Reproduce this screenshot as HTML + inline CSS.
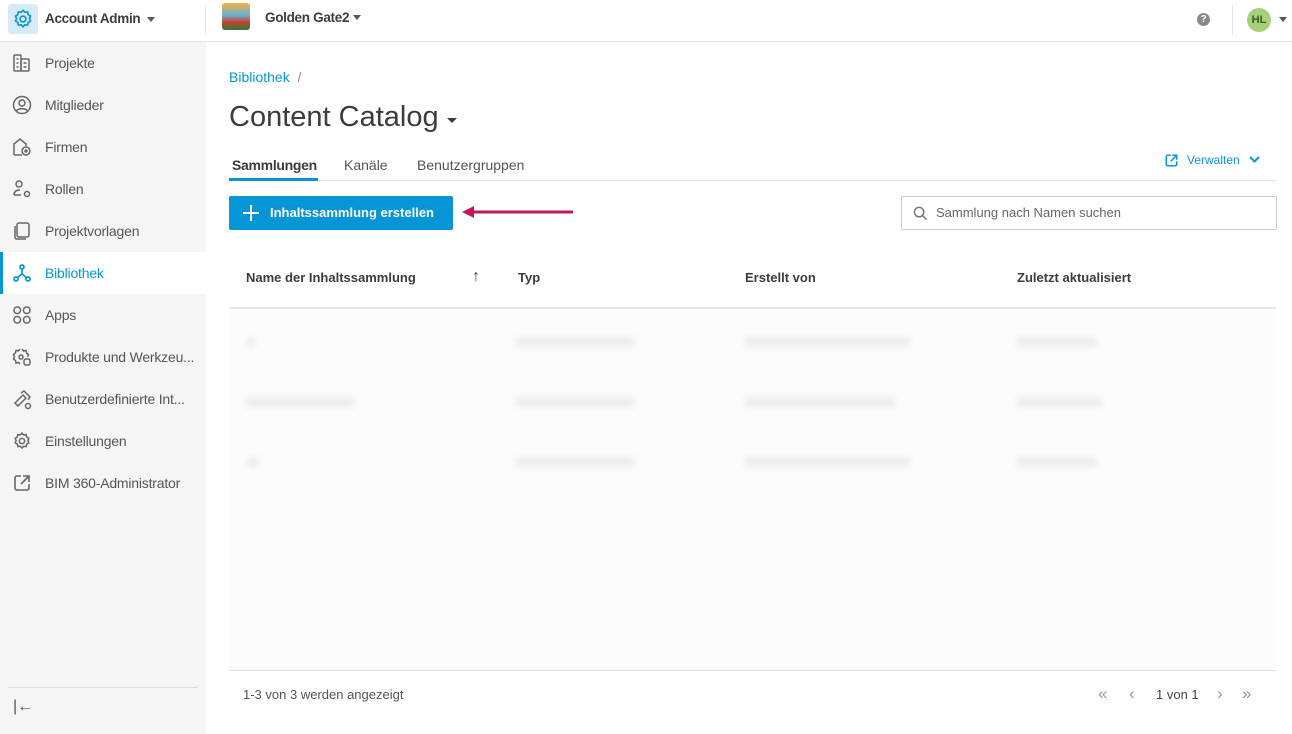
<!DOCTYPE html>
<html><head><meta charset="utf-8"><style>
*{box-sizing:border-box;margin:0;padding:0}
body{width:1292px;height:734px;overflow:hidden;background:#fff;font-family:"Liberation Sans",sans-serif;color:#3c3c3c;position:relative}
.a{position:absolute}
.top{left:0;top:0;width:1292px;height:42px;border-bottom:1px solid #e2e2e2;background:#fff}
.side{left:0;top:42px;width:206px;height:692px;background:#f5f5f5}
.item{position:absolute;left:0;width:206px;height:42px;display:flex;align-items:center;font-size:14px;color:#555}
.item svg{position:absolute;left:12px;top:11px}
.item span{position:absolute;left:45px;letter-spacing:-0.2px}
.act{background:#fff;color:#0696d7;border-left:3px solid #0696d7}
.blur{position:absolute;height:10px;background:#ececec;filter:blur(3px);border-radius:3px}
.th{position:absolute;top:270px;font-size:13px;font-weight:bold;color:#3c3c3c}
</style></head><body>
<div class="a top">
 <div class="a" style="left:8px;top:4px;width:30px;height:30px;background:#d6ebf7;border-radius:3px"></div>
 <svg class="a" style="left:12px;top:8px" width="22" height="22" viewBox="0 0 24 24" fill="none" stroke="#0696d7" stroke-width="1.8"><path d="M12 2.5l2 2.2 3-.4.6 2.9 2.6 1.6-1.2 2.7 1.2 2.7-2.6 1.6-.6 2.9-3-.4-2 2.2-2-2.2-3 .4-.6-2.9-2.6-1.6 1.2-2.7-1.2-2.7 2.6-1.6.6-2.9 3 .4z"/><circle cx="12" cy="12" r="3.2"/></svg>
 <div class="a" style="left:45px;top:11px;font-size:13.5px;font-weight:bold;color:#3c3c3c;letter-spacing:-0.3px">Account Admin</div>
 <div class="a" style="left:147px;top:17px;border:4px solid transparent;border-top:5px solid #555"></div>
 <div class="a" style="left:205px;top:5px;width:1px;height:30px;background:#e5e5e5"></div>
 <div class="a" style="left:222px;top:3px;width:28px;height:27px;border-radius:3px;background:linear-gradient(#f2b33d 0,#6ab0d8 45%,#c8412f 70%,#2f7a3a 100%)"></div>
 <div class="a" style="left:265px;top:10px;font-size:13.5px;font-weight:bold;color:#3c3c3c;letter-spacing:-0.3px">Golden Gate2</div>
 <div class="a" style="left:353px;top:15px;border:4px solid transparent;border-top:5px solid #555"></div>
 <div class="a" style="left:1197px;top:13px;width:13px;height:13px;border-radius:50%;background:#8a8a8a;color:#fff;font-size:10px;font-weight:bold;text-align:center;line-height:13px">?</div>
 <div class="a" style="left:1232px;top:5px;width:1px;height:30px;background:#e5e5e5"></div>
 <div class="a" style="left:1247px;top:8px;width:24px;height:24px;border-radius:50%;background:#a6d07a;color:#3c5a2a;font-size:11px;font-weight:bold;text-align:center;line-height:24px">HL</div>
 <div class="a" style="left:1279px;top:17px;border:4px solid transparent;border-top:5px solid #555"></div>
</div>
<div class="a side">
 <div class="item" style="top:0"><svg width="20" height="20" viewBox="0 0 20 20" fill="none" stroke="#666" stroke-width="1.5"><rect x="2" y="2" width="7" height="16" rx="1"/><rect x="9" y="6" width="8" height="12" rx="1"/><path d="M4.5 6h2M4.5 10h2M4.5 14h2M11.5 10h3M11.5 14h3"/></svg><span>Projekte</span></div>
 <div class="item" style="top:42px"><svg width="20" height="20" viewBox="0 0 20 20" fill="none" stroke="#666" stroke-width="1.5"><circle cx="10" cy="10" r="8.5"/><circle cx="10" cy="8" r="3"/><path d="M4.5 16c1.5-3 9.5-3 11 0"/></svg><span>Mitglieder</span></div>
 <div class="item" style="top:84px"><svg width="20" height="20" viewBox="0 0 20 20" fill="none" stroke="#666" stroke-width="1.5"><path d="M2 18V7l6-5 6 5v2M2 18h8"/><circle cx="14" cy="14" r="4"/><circle cx="14" cy="14" r="1"/></svg><span>Firmen</span></div>
 <div class="item" style="top:126px"><svg width="20" height="20" viewBox="0 0 20 20" fill="none" stroke="#666" stroke-width="1.5"><circle cx="7" cy="5" r="3"/><path d="M2 16c0-4 3-5 6-5M2 16h7"/><circle cx="15" cy="15" r="2.5"/></svg><span>Rollen</span></div>
 <div class="item" style="top:168px"><svg width="20" height="20" viewBox="0 0 20 20" fill="none" stroke="#666" stroke-width="1.5"><rect x="5" y="2" width="12" height="14" rx="2"/><path d="M3 5v11a2 2 0 002 2h9"/></svg><span>Projektvorlagen</span></div>
 <div class="item act" style="top:210px"><svg style="left:9px" width="20" height="20" viewBox="0 0 20 20" fill="none" stroke="#0696d7" stroke-width="1.7"><circle cx="10" cy="4" r="2"/><circle cx="4" cy="16" r="2"/><circle cx="16" cy="16" r="2"/><path d="M10 6v5l-5 4M10 11l5 4"/></svg><span style="left:42px">Bibliothek</span></div>
 <div class="item" style="top:252px"><svg width="20" height="20" viewBox="0 0 20 20" fill="none" stroke="#666" stroke-width="1.5"><rect x="2" y="2" width="6.5" height="6.5" rx="3"/><rect x="11.5" y="2" width="6.5" height="6.5" rx="3"/><rect x="2" y="11.5" width="6.5" height="6.5" rx="3"/><rect x="11.5" y="11.5" width="6.5" height="6.5" rx="3"/></svg><span>Apps</span></div>
 <div class="item" style="top:294px"><svg width="20" height="20" viewBox="0 0 20 20" fill="none" stroke="#666" stroke-width="1.5"><path d="M10 2l1.5 2 2.5-.5.5 2.5 2 1.5-1 2.3M8 17l-1.5-1.5-2.5.5-.5-2.5-2-1.5 1-2.3-1-2.3 2-1.5.5-2.5 2.5.5L8 2"/><circle cx="9" cy="10" r="2"/><rect x="12" y="12" width="6" height="6" rx="2"/></svg><span>Produkte und Werkzeu...</span></div>
 <div class="item" style="top:336px"><svg width="22" height="22" viewBox="0 0 22 22" fill="none" stroke="#666" stroke-width="1.5"><path d="M3 14l8-8 3 3-8 8zM9 4l3-2 6 6-2 3"/><circle cx="16" cy="17" r="2.5"/></svg><span>Benutzerdefinierte Int...</span></div>
 <div class="item" style="top:378px"><svg width="20" height="20" viewBox="0 0 24 24" fill="none" stroke="#666" stroke-width="1.8"><path d="M12 2.5l2 2.2 3-.4.6 2.9 2.6 1.6-1.2 2.7 1.2 2.7-2.6 1.6-.6 2.9-3-.4-2 2.2-2-2.2-3 .4-.6-2.9-2.6-1.6 1.2-2.7-1.2-2.7 2.6-1.6.6-2.9 3 .4z"/><circle cx="12" cy="12" r="3.2"/></svg><span>Einstellungen</span></div>
 <div class="item" style="top:420px"><svg width="20" height="20" viewBox="0 0 20 20" fill="none" stroke="#666" stroke-width="1.6"><path d="M9 3H5a2 2 0 00-2 2v10a2 2 0 002 2h10a2 2 0 002-2v-4M11 3h6v6M17 3l-8 8"/></svg><span>BIM 360-Administrator</span></div>
 <div class="a" style="left:8px;top:645px;width:190px;height:1px;background:#ddd"></div>
 <div class="a" style="left:13px;top:656px;font-size:16px;color:#555">|←</div>
</div>
<div class="a" style="left:229px;top:69px;font-size:14px;color:#0696d7">Bibliothek <span style="color:#888">&nbsp;/</span></div>
<div class="a" style="left:229px;top:101px;font-size:29px;color:#3c3c3c">Content Catalog</div>
<div class="a" style="left:447px;top:118px;border:5px solid transparent;border-top:5px solid #3c3c3c"></div>
<div class="a" style="left:232px;top:157px;font-size:14px;font-weight:bold;color:#3c3c3c;letter-spacing:-0.3px">Sammlungen</div>
<div class="a" style="left:344px;top:157px;font-size:14px;color:#555">Kanäle</div>
<div class="a" style="left:417px;top:157px;font-size:14px;color:#555">Benutzergruppen</div>
<div class="a" style="left:229px;top:180px;width:1047px;height:1px;background:#e0e0e0"></div>
<div class="a" style="left:229px;top:178px;width:89px;height:3px;background:#0696d7"></div>
<svg class="a" style="left:1164px;top:153px" width="15" height="15" viewBox="0 0 20 20" fill="none" stroke="#0696d7" stroke-width="2"><path d="M9 3H5a2 2 0 00-2 2v10a2 2 0 002 2h10a2 2 0 002-2v-4M11 3h6v6M17 3l-8 8"/></svg>
<div class="a" style="left:1187px;top:153px;font-size:12px;color:#0696d7">Verwalten</div>
<svg class="a" style="left:1248px;top:155px" width="13" height="10" viewBox="0 0 13 10" fill="none" stroke="#0696d7" stroke-width="2"><path d="M2 2l4.5 4.5L11 2"/></svg>
<div class="a" style="left:229px;top:196px;width:224px;height:34px;background:#0696d7;border-radius:2px;color:#fff;font-size:13px;font-weight:bold;line-height:34px;padding-left:41px">Inhaltssammlung erstellen</div>
<div class="a" style="left:243px;top:212px;width:16px;height:2px;background:#fff"></div>
<div class="a" style="left:250px;top:205px;width:2px;height:16px;background:#fff"></div>
<svg class="a" style="left:460px;top:203px" width="116" height="18" viewBox="0 0 116 18"><path d="M113 9H10" stroke="#c2185b" stroke-width="3"/><path d="M2 9l12-6v12z" fill="#c2185b"/></svg>
<div class="a" style="left:901px;top:196px;width:376px;height:34px;border:1px solid #ccc;border-radius:2px"></div>
<svg class="a" style="left:913px;top:206px" width="15" height="15" viewBox="0 0 16 16" fill="none" stroke="#777" stroke-width="1.6"><circle cx="6.5" cy="6.5" r="5"/><path d="M10.5 10.5l4 4"/></svg>
<div class="a" style="left:936px;top:205px;font-size:13px;color:#666">Sammlung nach Namen suchen</div>
<div class="th" style="left:246px">Name der Inhaltssammlung</div>
<div class="a" style="left:472px;top:268px;font-size:16px;color:#444">↑</div>
<div class="th" style="left:518px">Typ</div>
<div class="th" style="left:745px">Erstellt von</div>
<div class="th" style="left:1017px">Zuletzt aktualisiert</div>
<div class="a" style="left:229px;top:307px;width:1047px;height:2px;background:#e6e6e6"></div>
<div class="a" style="left:229px;top:310px;width:1047px;height:360px;background:#fcfcfc"></div>
<div class="blur" style="left:515px;top:337px;width:120px"></div><div class="blur" style="left:745px;top:337px;width:165px"></div><div class="blur" style="left:1017px;top:337px;width:80px"></div><div class="blur" style="left:247px;top:337px;width:8px"></div>
<div class="blur" style="left:245px;top:397px;width:110px"></div><div class="blur" style="left:515px;top:397px;width:120px"></div><div class="blur" style="left:745px;top:397px;width:150px"></div><div class="blur" style="left:1017px;top:397px;width:85px"></div>
<div class="blur" style="left:247px;top:457px;width:12px"></div><div class="blur" style="left:515px;top:457px;width:120px"></div><div class="blur" style="left:745px;top:457px;width:165px"></div><div class="blur" style="left:1017px;top:457px;width:80px"></div>
<div class="a" style="left:229px;top:670px;width:1047px;height:1px;background:#e2e2e2"></div>
<div class="a" style="left:243px;top:687px;font-size:13px;color:#555">1-3 von 3 werden angezeigt</div>
<div class="a" style="left:1098px;top:684px;font-size:17px;color:#999">«</div>
<div class="a" style="left:1129px;top:684px;font-size:17px;color:#999">‹</div>
<div class="a" style="left:1156px;top:687px;font-size:13px;color:#444">1 von 1</div>
<div class="a" style="left:1217px;top:684px;font-size:17px;color:#999">›</div>
<div class="a" style="left:1242px;top:684px;font-size:17px;color:#999">»</div>
</body></html>
